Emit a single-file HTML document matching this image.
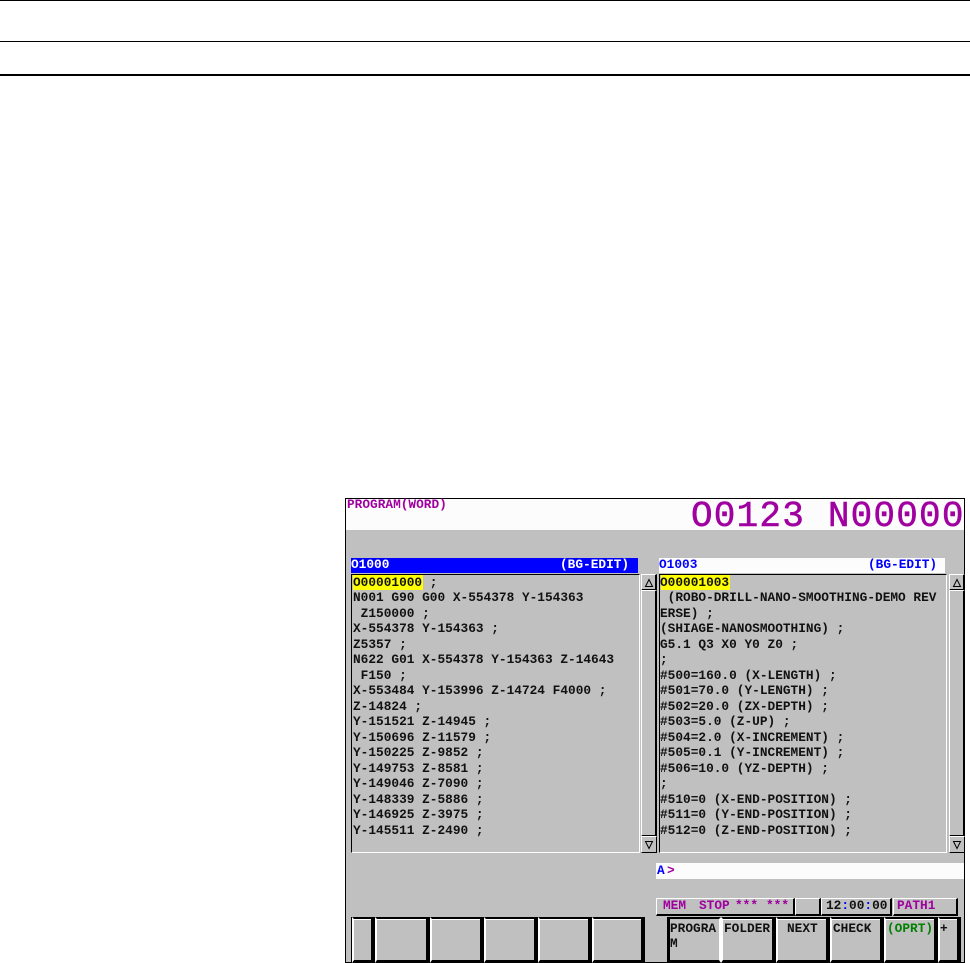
<!DOCTYPE html>
<html>
<head>
<meta charset="utf-8">
<style>
html,body{margin:0;padding:0;background:#fff;}
#p{position:relative;width:970px;height:963px;overflow:hidden;background:#fff;font-family:"Liberation Mono",monospace;font-weight:bold;font-size:12.8px;color:#111;}
#p div{position:absolute;box-sizing:border-box;}
.t{white-space:pre;line-height:16px;height:16px;}
.m{color:#a000a0;}
.b{color:#0000ff;}
.sb{background:#c0c0c0;border-top:1px solid #fff;border-left:1px solid #fff;border-right:2px solid #000;border-bottom:2px solid #000;}
.k{top:917px;height:46px;background:#c0c0c0;border-top:2px solid #000;border-bottom:3px solid #000;border-left:2px solid #fff;border-right:4px solid #000;box-shadow:inset 0 1px 0 #fff;}
.kt{top:921px;}
</style>
</head>
<body>
<div id="p">
<div style="left:0;top:0;width:970px;height:1px;background:#000"></div>
<div style="left:0;top:41px;width:970px;height:1px;background:#000"></div>
<div style="left:0;top:74px;width:970px;height:2px;background:#000"></div>

<div style="left:345px;top:498px;width:620px;height:465px;background:#c0c0c0;border:1px solid #000;"></div>
<div style="left:346px;top:499px;width:618px;height:31px;background:#fcfcfc"></div>
<div class="t m" style="left:347px;top:497px;">PROGRAM(WORD)</div>
<div class="t m" style="left:691px;top:500px;height:34px;line-height:34px;font-size:36px;font-weight:normal;letter-spacing:1.2px;-webkit-text-stroke:.5px #a000a0;">O0123 N00000</div>

<div style="left:351px;top:558px;width:287px;height:15px;background:#0000ff"></div>
<div class="t" style="left:351px;top:557px;color:#fff;">O1000</div>
<div class="t" style="left:560px;top:557px;color:#fff;">(BG-EDIT)</div>
<div style="left:659px;top:558px;width:286px;height:15px;background:#fcfcfc"></div>
<div class="t b" style="left:659px;top:557px;">O1003</div>
<div class="t b" style="left:868px;top:557px;">(BG-EDIT)</div>

<div style="left:351px;top:574px;width:289px;height:279px;border:1px solid #000;border-right:1px solid #fff;border-bottom:1px solid #fff"></div>
<div style="left:659px;top:574px;width:288px;height:279px;border:1px solid #000;border-right:1px solid #fff;border-bottom:1px solid #fff"></div>

<div style="left:353px;top:575px;width:70px;height:15px;background:#ffff00"></div>
<div style="left:661px;top:575px;width:69px;height:15px;background:#ffff00"></div>

<div class="t" style="left:353px;top:575px;">O00001000 ;</div>
<div class="t" style="left:353px;top:590px;">N001 G90 G00 X-554378 Y-154363</div>
<div class="t" style="left:353px;top:606px;"> Z150000 ;</div>
<div class="t" style="left:353px;top:621px;">X-554378 Y-154363 ;</div>
<div class="t" style="left:353px;top:637px;">Z5357 ;</div>
<div class="t" style="left:353px;top:652px;">N622 G01 X-554378 Y-154363 Z-14643</div>
<div class="t" style="left:353px;top:668px;"> F150 ;</div>
<div class="t" style="left:353px;top:683px;">X-553484 Y-153996 Z-14724 F4000 ;</div>
<div class="t" style="left:353px;top:699px;">Z-14824 ;</div>
<div class="t" style="left:353px;top:714px;">Y-151521 Z-14945 ;</div>
<div class="t" style="left:353px;top:730px;">Y-150696 Z-11579 ;</div>
<div class="t" style="left:353px;top:745px;">Y-150225 Z-9852 ;</div>
<div class="t" style="left:353px;top:761px;">Y-149753 Z-8581 ;</div>
<div class="t" style="left:353px;top:776px;">Y-149046 Z-7090 ;</div>
<div class="t" style="left:353px;top:792px;">Y-148339 Z-5886 ;</div>
<div class="t" style="left:353px;top:807px;">Y-146925 Z-3975 ;</div>
<div class="t" style="left:353px;top:823px;">Y-145511 Z-2490 ;</div>

<div class="t" style="left:660px;top:575px;">O00001003</div>
<div class="t" style="left:660px;top:590px;"> (ROBO-DRILL-NANO-SMOOTHING-DEMO REV</div>
<div class="t" style="left:660px;top:606px;">ERSE) ;</div>
<div class="t" style="left:660px;top:621px;">(SHIAGE-NANOSMOOTHING) ;</div>
<div class="t" style="left:660px;top:637px;">G5.1 Q3 X0 Y0 Z0 ;</div>
<div class="t" style="left:660px;top:652px;">;</div>
<div class="t" style="left:660px;top:668px;">#500=160.0 (X-LENGTH) ;</div>
<div class="t" style="left:660px;top:683px;">#501=70.0 (Y-LENGTH) ;</div>
<div class="t" style="left:660px;top:699px;">#502=20.0 (ZX-DEPTH) ;</div>
<div class="t" style="left:660px;top:714px;">#503=5.0 (Z-UP) ;</div>
<div class="t" style="left:660px;top:730px;">#504=2.0 (X-INCREMENT) ;</div>
<div class="t" style="left:660px;top:745px;">#505=0.1 (Y-INCREMENT) ;</div>
<div class="t" style="left:660px;top:761px;">#506=10.0 (YZ-DEPTH) ;</div>
<div class="t" style="left:660px;top:776px;">;</div>
<div class="t" style="left:660px;top:792px;">#510=0 (X-END-POSITION) ;</div>
<div class="t" style="left:660px;top:807px;">#511=0 (Y-END-POSITION) ;</div>
<div class="t" style="left:660px;top:823px;">#512=0 (Z-END-POSITION) ;</div>

<!-- scrollbars -->
<div class="sb" style="left:641px;top:574px;width:16px;height:17px;"></div>
<div class="sb" style="left:641px;top:590px;width:16px;height:247px;"></div>
<div class="sb" style="left:641px;top:836px;width:16px;height:17px;border-right:1px solid #000;border-bottom:1px solid #000"></div>
<div class="sb" style="left:949px;top:574px;width:16px;height:17px;"></div>
<div class="sb" style="left:949px;top:590px;width:16px;height:247px;"></div>
<div class="sb" style="left:949px;top:836px;width:16px;height:17px;border-right:1px solid #000;border-bottom:1px solid #000"></div>
<svg style="position:absolute;left:0;top:0" width="970" height="963" fill="none" stroke="#000" stroke-width="1">
<path d="M645.5 586.5h7l-3.5-7z"/><path d="M953.5 586.5h7l-3.5-7z"/>
<path d="M645.5 841.5h7l-3.5 7z"/><path d="M953.5 841.5h7l-3.5 7z"/>
</svg>

<!-- input -->
<div style="left:656px;top:863px;width:308px;height:16px;background:#fcfcfc"></div>
<div class="t b" style="left:657px;top:863px;">A</div>
<div class="t m" style="left:667px;top:863px;">&gt;</div>

<!-- status -->
<div class="sb" style="left:656px;top:898px;width:139px;height:18px;"></div>
<div class="sb" style="left:795px;top:898px;width:26px;height:18px;"></div>
<div class="sb" style="left:821px;top:898px;width:71px;height:18px;"></div>
<div class="sb" style="left:893px;top:898px;width:65px;height:18px;"></div>
<div class="t m" style="left:663px;top:898px;">MEM</div>
<div class="t m" style="left:699px;top:898px;">STOP</div>
<div class="t m" style="left:735px;top:898px;">***</div>
<div class="t m" style="left:766px;top:898px;">***</div>
<div class="t" style="left:826px;top:898px;">12<span class="b">:</span>00<span class="b">:</span>00</div>
<div class="t m" style="left:897px;top:898px;">PATH1</div>

<!-- soft keys -->
<div style="left:351px;top:917px;width:1px;height:46px;background:#000"></div>
<div class="k" style="left:352px;width:23px;"></div>
<div class="k" style="left:375px;width:55px;"></div>
<div class="k" style="left:430px;width:54px;"></div>
<div class="k" style="left:484px;width:54px;"></div>
<div class="k" style="left:538px;width:54px;"></div>
<div class="k" style="left:592px;width:53px;"></div>

<div class="k" style="left:667px;width:54px;border-left:3px solid #000;border-right:2px solid #fff;box-shadow:none;"></div>
<div class="k" style="left:721px;width:55px;"></div>
<div class="k" style="left:776px;width:54px;"></div>
<div class="k" style="left:830px;width:54px;"></div>
<div class="k" style="left:884px;width:54px;"></div>
<div class="k" style="left:938px;width:23px;"></div>

<div class="t kt" style="left:670px;">PROGRA</div>
<div class="t" style="left:670px;top:936px;">M</div>
<div class="t kt" style="left:724px;">FOLDER</div>
<div class="t kt" style="left:787px;">NEXT</div>
<div class="t kt" style="left:833px;">CHECK</div>
<div class="t kt" style="left:887px;color:#008000;">(OPRT)</div>
<div class="t kt" style="left:940px;">+</div>
</div>
</body>
</html>
